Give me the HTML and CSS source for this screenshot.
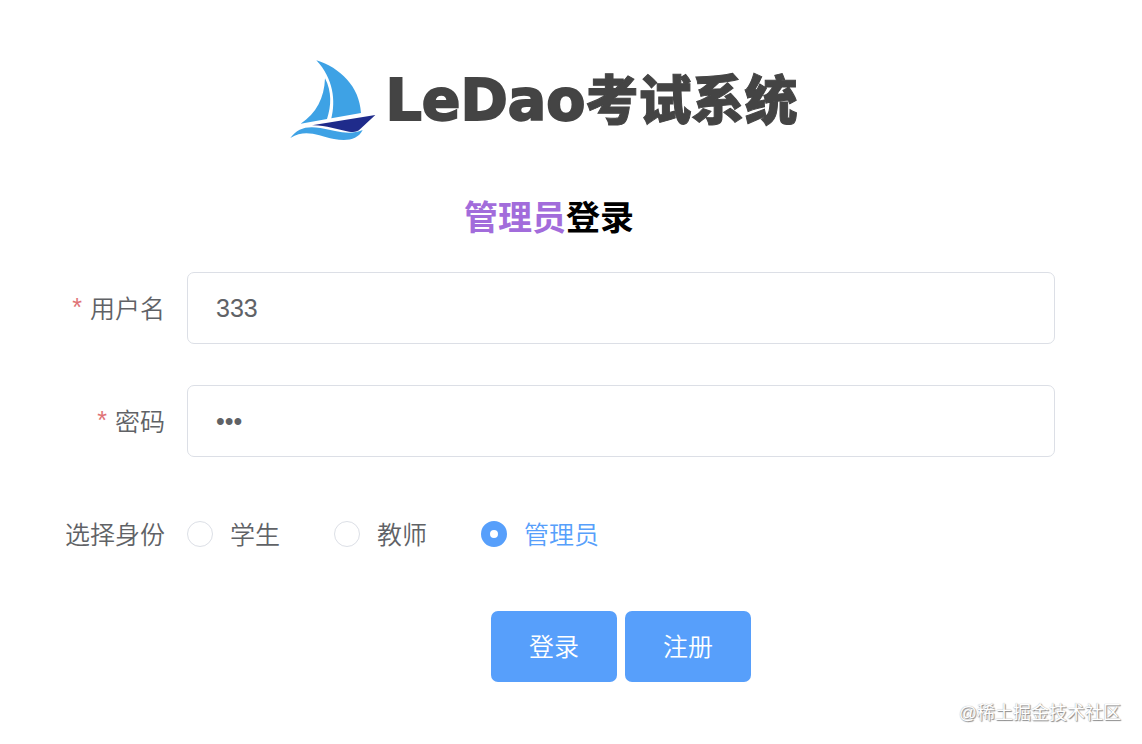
FILE: index.html
```
<!DOCTYPE html>
<html lang="zh-CN">
<head>
    <meta charset="UTF-8">
    <meta name="viewport" content="width=device-width, initial-scale=1.0">
    <title>LeDao考试系统</title>
    <link rel="stylesheet" href="styles.css">
</head>
<body>
    <main class="login">
        <div class="logo">
            <svg class="logo-icon" viewBox="0 0 315 300" aria-hidden="true">
                <path fill="#3ea2e5" d="M106 31 C177 53 236 110 240 189 L151 205 C164 154 158 86 106 31Z"/>
                <path fill="#3ea2e5" d="M132 85 C153 125 151 169 138 207 L59 221 C106 190 130 144 132 85Z"/>
                <path fill="#1f2b8b" d="M93 226 L283 195 L237 238 C229 246 219 247 204 245 C168 239 134 225 93 226Z"/>
                <path fill="#3ea2e5" d="M28 264 C49 234 79 227 118 234 C165 243 205 257 245 240 C230 270 197 274 159 267 C109 257 75 235 28 264Z"/>
            </svg>
            <div class="logo-text"><span class="logo-latin">LeDao</span><span class="logo-cjk">考试系统</span></div>
        </div>
        <h1 class="title"><span class="role">管理员</span>登录</h1>
        <form class="form" onsubmit="return false">
            <div class="form-item">
                <label class="form-label required" for="userName">用户名</label>
                <input class="form-input" type="text" id="userName" value="333">
            </div>
            <div class="form-item">
                <label class="form-label required" for="password">密码</label>
                <input class="form-input" type="password" id="password" value="333">
            </div>
            <div class="form-item" role="radiogroup" aria-labelledby="roleLabel">
                <span class="form-label" id="roleLabel">选择身份</span>
                <div class="radio-group">
                    <label class="radio"><input type="radio" name="role" value="student"><span>学生</span></label>
                    <label class="radio"><input type="radio" name="role" value="teacher"><span>教师</span></label>
                    <label class="radio"><input type="radio" name="role" value="admin" checked><span>管理员</span></label>
                </div>
            </div>
            <div class="form-buttons">
                <button class="btn" type="submit">登录</button>
                <button class="btn" type="button">注册</button>
            </div>
        </form>
    </main>
    <footer class="watermark">@稀土掘金技术社区</footer>
</body>
</html>
```

FILE: styles.css
```
* { box-sizing: border-box; }
body {
    margin: 0;
    background: #fff;
    color: #606266;
    font-family: "Liberation Sans", "Noto Sans CJK SC", sans-serif;
    font-size: 25px;
}
.login { padding: 50px 87px 0 43px; }

/* logo */
.logo { display: flex; justify-content: center; align-items: center; height: 100px; padding-right: 20px; }
.logo-icon { width: 105px; height: 100px; flex: none; }
.logo-text {
    display: flex;
    align-items: flex-start;
    color: #444;
    white-space: nowrap;
}
.logo-latin {
    font-family: "DejaVu Sans", sans-serif;
    font-weight: 700;
    font-size: 57px;
    line-height: 60px;
    -webkit-text-stroke: 2px #444;
}
.logo-cjk {
    font-family: "Noto Sans CJK SC", sans-serif;
    font-weight: 900;
    font-size: 53px;
    line-height: 54px;
    -webkit-text-stroke: 1px #444;
}

.title {
    margin: 42px 0 28px;
    color: #000;
    font-size: 34px;
    line-height: 52px;
    text-align: center;
}
.role { color: #a26cdb; }

/* form */
.form-item { display: flex; align-items: center; min-height: 72px; margin-bottom: 41px; }
.form-label {
    flex: none;
    width: 144px;
    padding: 0 22px 3px 0;
    text-align: right;
    white-space: nowrap;
}
.required::before { content: "*"; margin-right: 8px; color: #e07377; vertical-align: 2px; }
.form-input {
    flex: 1;
    min-width: 0;
    height: 72px;
    padding: 0 28px;
    border: 1px solid #dcdfe6;
    border-radius: 7px;
    background: #fff;
    color: #606266;
    font: inherit;
    outline: none;
}
.form-input:focus { border-color: #579ffb; }

.radio-group { display: flex; flex-wrap: wrap; gap: 54px; }
.radio { display: flex; align-items: center; gap: 17px; cursor: pointer; }
.radio span { padding-bottom: 3px; }
.radio input {
    appearance: none;
    width: 26px;
    height: 26px;
    margin: 0;
    border: 1px solid #dcdfe6;
    border-radius: 50%;
    background: #fff;
}
.radio input:checked { border: 9px solid #579ffb; }
.radio input:checked + span { color: #579ffb; }
.form-label, .radio, .btn { font-weight: 350; }

.form-buttons { display: flex; justify-content: center; gap: 8px; padding-left: 144px; }
.btn {
    width: 126px;
    height: 71px;
    padding: 0 0 4px;
    border: 0;
    border-radius: 7px;
    background: #579ffb;
    color: #fff;
    font-family: inherit;
    font-size: 25px;
    cursor: pointer;
}

.watermark {
    padding: 18px 21px 0 0;
    color: #fff;
    font-size: 18px;
    line-height: 26px;
    text-align: right;
    text-shadow: 0 0 1px #999, 1px 1px 1px #888;
}
```
